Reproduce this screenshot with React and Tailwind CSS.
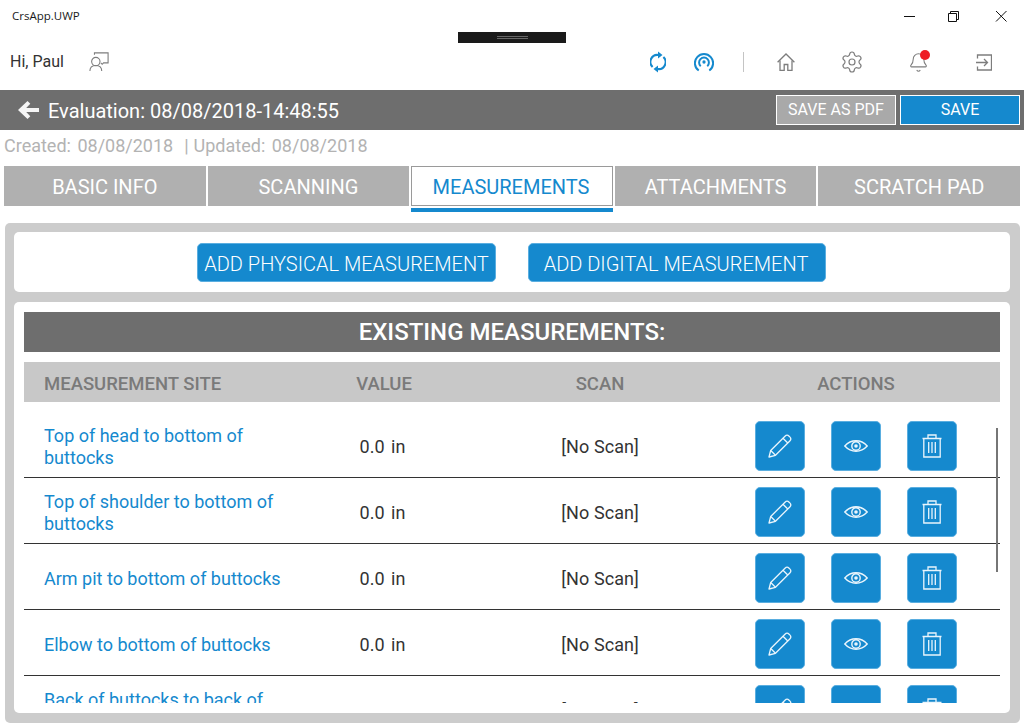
import React from "react";
import { Settings, Bell } from "lucide-react";

const rows = [
  "Top of head to bottom of buttocks",
  "Top of shoulder to bottom of buttocks",
  "Arm pit to bottom of buttocks",
  "Elbow to bottom of buttocks",
  "Back of buttocks to back of knee",
];

function SyncIcon() {
  return (
    <svg width="16" height="22" viewBox="0 0 16 22" fill="none" stroke="#1589ce" strokeWidth="2.1">
      <path d="M2.600 16A7 7 0 0 1 8.500 4" />
      <path d="M13.400 6A7 7 0 0 1 7.500 18" />
      <path d="M8 .5L12.500 4 8 7.500z" fill="#1589ce" stroke="none" />
      <path d="M8 14.500L3.500 18 8 21.500z" fill="#1589ce" stroke="none" />
    </svg>
  );
}
function SignalIcon() {
  return (
    <svg width="20" height="20" viewBox="0 0 22 22" fill="none" stroke="#1589ce" strokeWidth="2.2">
      <path d="M5.200 20.400A10 10 0 1 1 16.800 20.400" />
      <path d="M7.400 15.600A5.400 5.400 0 1 1 14.600 15.600" />
      <circle cx="11" cy="11" r="1.800" fill="#1589ce" stroke="none" />
    </svg>
  );
}
function PresenterIcon() {
  return (
    <svg width="20" height="20" viewBox="0 0 22 22" fill="none" stroke="#7d7d7d" strokeWidth="1.200">
      <path d="M6 3V1h15v11h-5l-1.500 1.500L13 12" />
      <circle cx="7.500" cy="10.500" r="4.600" />
      <path d="M1 21c0-4 2.500-6.200 6.500-6.200S14 17 14 21" />
    </svg>
  );
}
function HomeIcon() {
  return (
    <svg width="18" height="18" viewBox="0 0 18 18" fill="none" stroke="#7d7d7d" strokeWidth="1.300">
      <path d="M.6 9.200L9 1l8.400 8.200" />
      <path d="M3 7.500v10h4.200v-6h3.600v6H15v-10" />
    </svg>
  );
}
function ExitIcon() {
  return (
    <svg width="16" height="17" viewBox="0 0 16 17" fill="none" stroke="#7d7d7d" strokeWidth="1.300">
      <path d="M1.500 4.500V1h14v15h-14v-3.500" />
      <path d="M0 8.500h11M8 5l3.500 3.500L8 12" />
    </svg>
  );
}
function PencilIcon() {
  return (
    <svg width="24" height="24" viewBox="0 0 24 24" fill="none" stroke="#eaf5fc" strokeWidth="1.300" strokeLinejoin="round">
      <path d="M1 23l1.700-6.500L17 2.200a2.900 2.900 0 0 1 4.100 0l.7.7a2.900 2.900 0 0 1 0 4.100L7.500 21.300z" />
      <path d="M2.700 16.500l4.800 4.800M15 4.200l4.800 4.800" />
    </svg>
  );
}
function EyeIcon() {
  return (
    <svg width="24" height="12" viewBox="0 0 24 12" fill="none" stroke="#eaf5fc" strokeWidth="1.400">
      <path d="M.8 6C4 2.500 7.500.8 12 .8s8 1.700 11.200 5.200c-3.200 3.500-6.700 5.200-11.200 5.200S4 9.500.8 6z" />
      <circle cx="12" cy="6" r="4.200" />
      <circle cx="12" cy="6" r="1.800" fill="#eaf5fc" stroke="none" />
    </svg>
  );
}
function TrashIcon() {
  return (
    <svg width="20" height="24" viewBox="0 0 20 24" fill="none" stroke="#eaf5fc" strokeWidth="1.300">
      <path d="M.5 4.500h19M1.800 4.500V23h16.400V4.500M6 4.500V1h8v3.500" />
      <path d="M6.700 8v11M10 8v11M13.300 8v11" />
    </svg>
  );
}
function IconButton({ children }) {
  return (
    <div className="w-[50px] h-[50px] shrink-0 rounded-[5px] bg-[#1589ce] border border-[#5aaee0] flex items-center justify-center">
      {children}
    </div>
  );
}
function Tab({ label, active }) {
  if (active) {
    return (
      <div className="h-[46px] border-b-4 border-[#1589ce]">
        <div className="h-10 pt-[2px] pr-[2px] border border-[#9a9a9a] bg-white flex items-center justify-center text-[#1589ce] text-xl">
          {label}
        </div>
      </div>
    );
  }
  return (
    <div className="h-10 pt-[2px] bg-[#b0b0b0] flex items-center justify-center text-white text-xl">
      {label}
    </div>
  );
}

export default function App() {
  return (
    <div className="relative w-[1024px] h-[728px] overflow-hidden bg-white font-['Roboto',sans-serif]">
      <div className="h-8 flex items-center pl-3 relative">
        <span className="text-[11.5px] text-[#1a1a1a] font-['Open_Sans',sans-serif]">CrsApp.UWP</span>
        <div className="ml-auto flex items-center">
          <svg width="46" height="32" viewBox="0 0 46 32" stroke="#111" fill="none" strokeWidth="1">
            <path d="M18 16.500h11" />
          </svg>
          <svg width="46" height="32" viewBox="0 0 46 32" stroke="#111" fill="none" strokeWidth="1">
            <path d="M16.500 13.500h8v8h-8zM18.500 13.500v-2h8v8h-2" />
          </svg>
          <svg width="46" height="32" viewBox="0 0 46 32" stroke="#111" fill="none" strokeWidth="1">
            <path d="M18 11l10.500 10.500M28.500 11L18 21.500" />
          </svg>
        </div>
      </div>
      <div className="absolute left-[458px] top-8 w-[108px] h-[11px] bg-[#1a1a1a] flex items-center justify-center">
        <div className="w-[31px] h-[3px] border-y border-[#666]" />
      </div>
      <div className="h-[58px] flex items-center pl-2.5 pt-[2px]">
        <span className="text-base text-[#333]">Hi, Paul</span>
        <span className="ml-[25px]"><PresenterIcon /></span>
        <div className="ml-auto flex items-center pr-8">
          <SyncIcon />
          <span className="ml-7"><SignalIcon /></span>
          <div className="ml-[29px] w-px h-5 bg-[#c4c4c4]" />
          <span className="ml-[33px]"><HomeIcon /></span>
          <Settings size={24} strokeWidth={1.200} color="#7d7d7d" className="ml-[45px]" />
          <div className="relative ml-[44px]">
            <Bell size={21} strokeWidth={1.200} color="#7d7d7d" />
            <div className="absolute -top-[2px] left-3 w-2.5 h-2.5 rounded-full bg-[#ee1c25]" />
          </div>
          <span className="ml-[47px]"><ExitIcon /></span>
        </div>
      </div>
      <div className="h-10 bg-[#6e6e6e] flex items-center pl-[18px] pr-1">
        <svg width="21" height="18" viewBox="0 0 21 18" fill="#f5f5f5">
          <path d="M9.500 0l2.800 2.800-4.100 4.100H21v4.200H8.200l4.100 4.100L9.500 18 0 9z" />
        </svg>
        <span className="ml-[9px] pt-[2px] text-xl text-white">Evaluation: 08/08/2018-14:48:55</span>
        <div className="ml-auto flex gap-1">
          <div className="w-[120px] h-[30px] border border-white bg-[#a9a9a9] text-white text-base flex items-center justify-center">SAVE AS PDF</div>
          <div className="w-[120px] h-[30px] border border-white bg-[#1589ce] text-white text-base flex items-center justify-center">SAVE</div>
        </div>
      </div>
      <div className="h-9 flex items-center pl-1 pb-1 text-lg text-[#b3b3b3] whitespace-pre">
        <span className="[word-spacing:2px]">Created: 08/08/2018</span>
        <span className="ml-[11px]">|</span>
        <span className="ml-[5px] [word-spacing:2px]">Updated: 08/08/2018</span>
      </div>
      <div className="grid grid-cols-5 items-start gap-0.5 px-1 h-[57px]">
        <Tab label="BASIC INFO" />
        <Tab label="SCANNING" />
        <Tab label="MEASUREMENTS" active />
        <Tab label="ATTACHMENTS" />
        <Tab label="SCRATCH PAD" />
      </div>
      <div className="ml-[5px] w-[1015px] h-[500px] rounded-[5px] bg-[#cccccc] pt-[9px] pl-[9px] pr-[10px] pb-[10px] flex flex-col gap-2.5">
        <div className="h-[60px] pr-px bg-white rounded-[5px] flex items-center justify-center gap-8">
          <div className="w-[299px] h-[39px] pt-[3px] rounded-[5px] bg-[#1589ce] border border-[#5aaee0] text-white text-xl font-light flex items-center justify-center">ADD PHYSICAL MEASUREMENT</div>
          <div className="w-[298px] h-[39px] pt-[3px] pr-[2px] rounded-[5px] bg-[#1589ce] border border-[#5aaee0] text-white text-xl font-light flex items-center justify-center">ADD DIGITAL MEASUREMENT</div>
        </div>
        <div className="relative flex-1 bg-white rounded-[5px] p-2.5 flex flex-col min-h-0">
          <div className="h-10 shrink-0 bg-[#6e6e6e] text-white text-2xl font-medium flex items-center justify-center">
            EXISTING MEASUREMENTS:
          </div>
          <div className="mt-2.5 h-10 shrink-0 pt-1.5 bg-[#c8c8c8] text-[#7a7a7a] text-[18.5px] font-medium grid grid-cols-[280px_160px_272px_264px] items-center">
            <div className="pl-5">MEASUREMENT SITE</div>
            <div className="text-center">VALUE</div>
            <div className="text-center">SCAN</div>
            <div className="text-center pr-6">ACTIONS</div>
          </div>
          <div className="mt-2.5 h-[291px] overflow-hidden">
            {rows.map((r) => (
              <div key={r} className="h-[66px] border-b border-[#333] grid grid-cols-[280px_160px_272px_264px] items-center text-lg leading-[22px]">
                <div className="pl-5 pt-1 text-[#1589ce]">{r}</div>
                <div className="pt-1 pr-[3px] text-center text-[#333] [word-spacing:2px]">0.0 in</div>
                <div className="pt-1 text-center text-[#333] [word-spacing:0.5px]">[No Scan]</div>
                <div className="flex justify-center gap-[26px] pt-[2px] pr-6">
                  <IconButton><PencilIcon /></IconButton>
                  <IconButton><EyeIcon /></IconButton>
                  <IconButton><TrashIcon /></IconButton>
                </div>
              </div>
            ))}
          </div>
          <div className="absolute left-[982px] top-[126px] w-0.5 h-36 bg-[#767676]" />
        </div>
      </div>
    </div>
  );
}
